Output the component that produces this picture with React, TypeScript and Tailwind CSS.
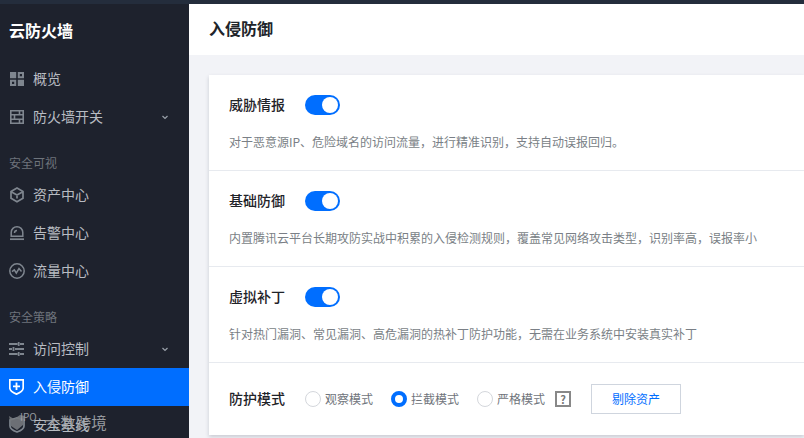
import React from "react";

const font = { fontFamily: '"Noto Sans CJK SC", "Liberation Sans", sans-serif' };

const Icons: Record<string, React.ReactNode> = {
  grid: (
    <svg width="14" height="14" viewBox="0 0 14 14" fill="#7f868f" fillRule="evenodd"><path d="M0 0h6.200v6.200H0zM7.800 0H14v6.200H7.800zM9.800 2v2.200H12V2zM0 7.800h6.200V14H0zM2 9.800V12h2.200V9.800zM7.800 7.800H14V14H7.800z" /></svg>
  ),
  table: (
    <svg width="14" height="14" viewBox="0 0 14 14" fill="none" stroke="#7f868f" strokeWidth="1.6"><path d="M.8.8h12.400v12.400H.8zM.8 4.700h12.400M.8 9.300h12.400M4.500 4.700v4.600M9.500.8v3.900M9.500 9.300v3.900" /></svg>
  ),
  box: (
    <svg width="16" height="16" viewBox="0 0 16 16" fill="none" stroke="#7f868f" strokeWidth="1.7"><path d="M8 1l6 3.400v6.800L8 14.800l-6-3.600V4.400zM3 5.200L8 8l5-2.800M8 8v3.500" /></svg>
  ),
  bell: (
    <svg width="16" height="16" viewBox="0 0 16 16" fill="none" stroke="#7f868f" strokeWidth="1.5"><path d="M2.200 11.200V7.500a5.800 5.800 0 0 1 11.600 0v3.700zM5.500 8a2.600 2.600 0 0 1 2.500-2.500" /><path d="M1 14.200h14" strokeWidth="1.700" /></svg>
  ),
  flow: (
    <svg width="16" height="16" viewBox="0 0 16 16" fill="none" stroke="#7f868f" strokeWidth="1.500"><circle cx="8" cy="8" r="7.200" /><path d="M3 8.600l2.300-1.800 2 3.200 2.700-4.500 2.500 3" /></svg>
  ),
  sliders: (
    <svg width="15" height="14" viewBox="0 0 15 14" fill="none" stroke="#7f868f" strokeWidth="1.800"><path d="M0 2h8.500M11 2h4M9.700 0v4M0 7h3M6 7h9M4.500 5v4M0 12h8.500M11 12h4M9.700 10v4" /></svg>
  ),
  shield: (
    <svg width="15" height="16" viewBox="0 0 15 16"><path d="M.8.900h13.400v8c0 2.800-3.800 5-6.700 6.200C4.600 13.900.8 11.700.8 8.900z" fill="none" stroke="#fff" strokeWidth="1.700" /><path d="M6.600 3.600h1.800v2.800H11v1.800H8.400V11H6.600V8.200H4V6.400h2.600z" fill="#fff" /></svg>
  ),
  safe: (
    <svg width="16" height="16" viewBox="0 0 16 16" fill="none" stroke="#7f868f" strokeWidth="1.700"><path d="M1 3l7-2 7 2v6c0 3-4 5-7 6-3-1-7-3-7-6z" /></svg>
  ),
};

function Chevron() {
  return (
    <svg width="6" height="5" viewBox="0 0 6 5" fill="none" stroke="#9aa1aa" strokeWidth="1.200" className="ml-auto mr-[21px]">
      <path d="M.5 1l2.500 2.500L5.500 1" />
    </svg>
  );
}

function Item({ icon, label, chevron, active }: { icon: string; label: string; chevron?: boolean; active?: boolean }) {
  return (
    <div className={active ? "flex h-[38px] shrink-0 items-center bg-[#006eff] text-white" : "flex h-[38px] shrink-0 items-center text-[#b8bcc2]"}>
      <span className="flex w-[33px] shrink-0 justify-center pl-[1px]"><span className="ml-[-1px] flex w-[16px] justify-center">{Icons[icon]}</span></span>
      <span className="pb-[2px] text-[14px] leading-[20px]">{label}</span>
      {chevron && <Chevron />}
    </div>
  );
}

function Group({ label }: { label: string }) {
  return <div className="flex h-[20px] shrink-0 items-center pl-[9px] text-[12px] text-[#6e747c]">{label}</div>;
}

function Toggle() {
  return (
    <span className="ml-[20px] flex h-[20px] w-[35px] items-center justify-end rounded-full bg-[#006eff] pr-[2px]">
      <span className="h-[16px] w-[16px] rounded-full bg-white" />
    </span>
  );
}

function Section({ title, desc }: { title: string; desc: string }) {
  return (
    <div className="flex h-[96px] flex-col border-b border-[#e7eaef] pl-[20px] pt-[20px]">
      <div className="flex h-[20px] shrink-0 items-center text-[14px] font-medium text-[#1f2329]">
        <span className="pb-[2px]">{title}</span>
        <Toggle />
      </div>
      <p className="mt-[17px] text-[12px] leading-[20px] text-[#7a7f86]">{desc}</p>
    </div>
  );
}

function Radio({ label, on }: { label: string; on?: boolean }) {
  return (
    <span className="flex items-center text-[12px] text-[#6f747b]">
      <span className={on ? "h-[16px] w-[16px] rounded-full border-[4px] border-[#006eff] bg-white" : "h-[16px] w-[16px] rounded-full border border-[#d4d7dc] bg-white"} />
      <span className="ml-[4px]">{label}</span>
    </span>
  );
}

export default function App() {
  return (
    <div style={font} className="flex h-[438px] w-[804px] flex-col overflow-hidden bg-[#f2f3f7]">
      <div className="h-[4px] shrink-0 bg-[#242d3c]" />
      <div className="flex min-h-0 flex-1">
        <aside className="relative flex w-[189px] shrink-0 flex-col overflow-hidden bg-[#1e222d]">
          <div className="flex h-[56px] shrink-0 items-center pb-[4px] pl-[9px] text-[16px] font-semibold text-white">云防火墙</div>
          <Item icon="grid" label="概览" />
          <Item icon="table" label="防火墙开关" chevron />
          <div className="h-[17px] shrink-0" />
          <Group label="安全可视" />
          <div className="h-[3px] shrink-0" />
          <Item icon="box" label="资产中心" />
          <Item icon="bell" label="告警中心" />
          <Item icon="flow" label="流量中心" />
          <div className="h-[17px] shrink-0" />
          <Group label="安全策略" />
          <div className="h-[3px] shrink-0" />
          <Item icon="sliders" label="访问控制" chevron />
          <Item icon="shield" label="入侵防御" active />
          <Item icon="safe" label="安全基线" />
          <div className="absolute left-[8px] top-[406px] flex h-[24px] items-center text-[15.500px] leading-[20px] text-[#a3a6ab] opacity-90">
            <svg width="18" height="18" viewBox="0 0 18 18" className="shrink-0"><path d="M1 3l5 3 6-4 5 1-2 9-6 5-6-4z" fill="#75787d" /></svg>
            <span className="mb-[10px] ml-[-6px] mr-[8px] text-[10px] leading-[12px]">IPO</span>
            <span>大数跨境</span>
          </div>
        </aside>
        <main className="flex min-w-0 flex-1 flex-col">
          <header className="flex h-[51px] shrink-0 items-center bg-white pb-[4px] pl-[20px] text-[16px] font-semibold text-[#20242a]">入侵防御</header>
          <div className="min-h-0 flex-1 pl-[20px] pt-[20px]">
            <div className="h-[360px] bg-white shadow-[0_2px_4px_rgba(54,58,80,0.22)]">
              <Section title="威胁情报" desc="对于恶意源IP、危险域名的访问流量，进行精准识别，支持自动误报回归。" />
              <Section title="基础防御" desc="内置腾讯云平台长期攻防实战中积累的入侵检测规则，覆盖常见网络攻击类型，识别率高，误报率小" />
              <Section title="虚拟补丁" desc="针对热门漏洞、常见漏洞、高危漏洞的热补丁防护功能，无需在业务系统中安装真实补丁" />
              <div className="flex h-[72px] items-center pl-[20px]">
                <span className="pb-[2px] text-[14px] font-medium text-[#1f2329]">防护模式</span>
                <span className="ml-[20px] flex items-center gap-[18px]">
                  <Radio label="观察模式" />
                  <Radio label="拦截模式" on />
                  <span className="flex items-center">
                    <Radio label="严格模式" />
                    <span className="ml-[10px] flex h-[16px] w-[16px] items-center justify-center border-2 border-[#888] text-[11px] font-bold leading-none text-[#777]">?</span>
                  </span>
                </span>
                <span className="ml-[20px] flex h-[30px] w-[90px] items-center justify-center border border-[#cfd5de] text-[12px] text-[#006eff]">剔除资产</span>
              </div>
            </div>
          </div>
        </main>
      </div>
    </div>
  );
}
